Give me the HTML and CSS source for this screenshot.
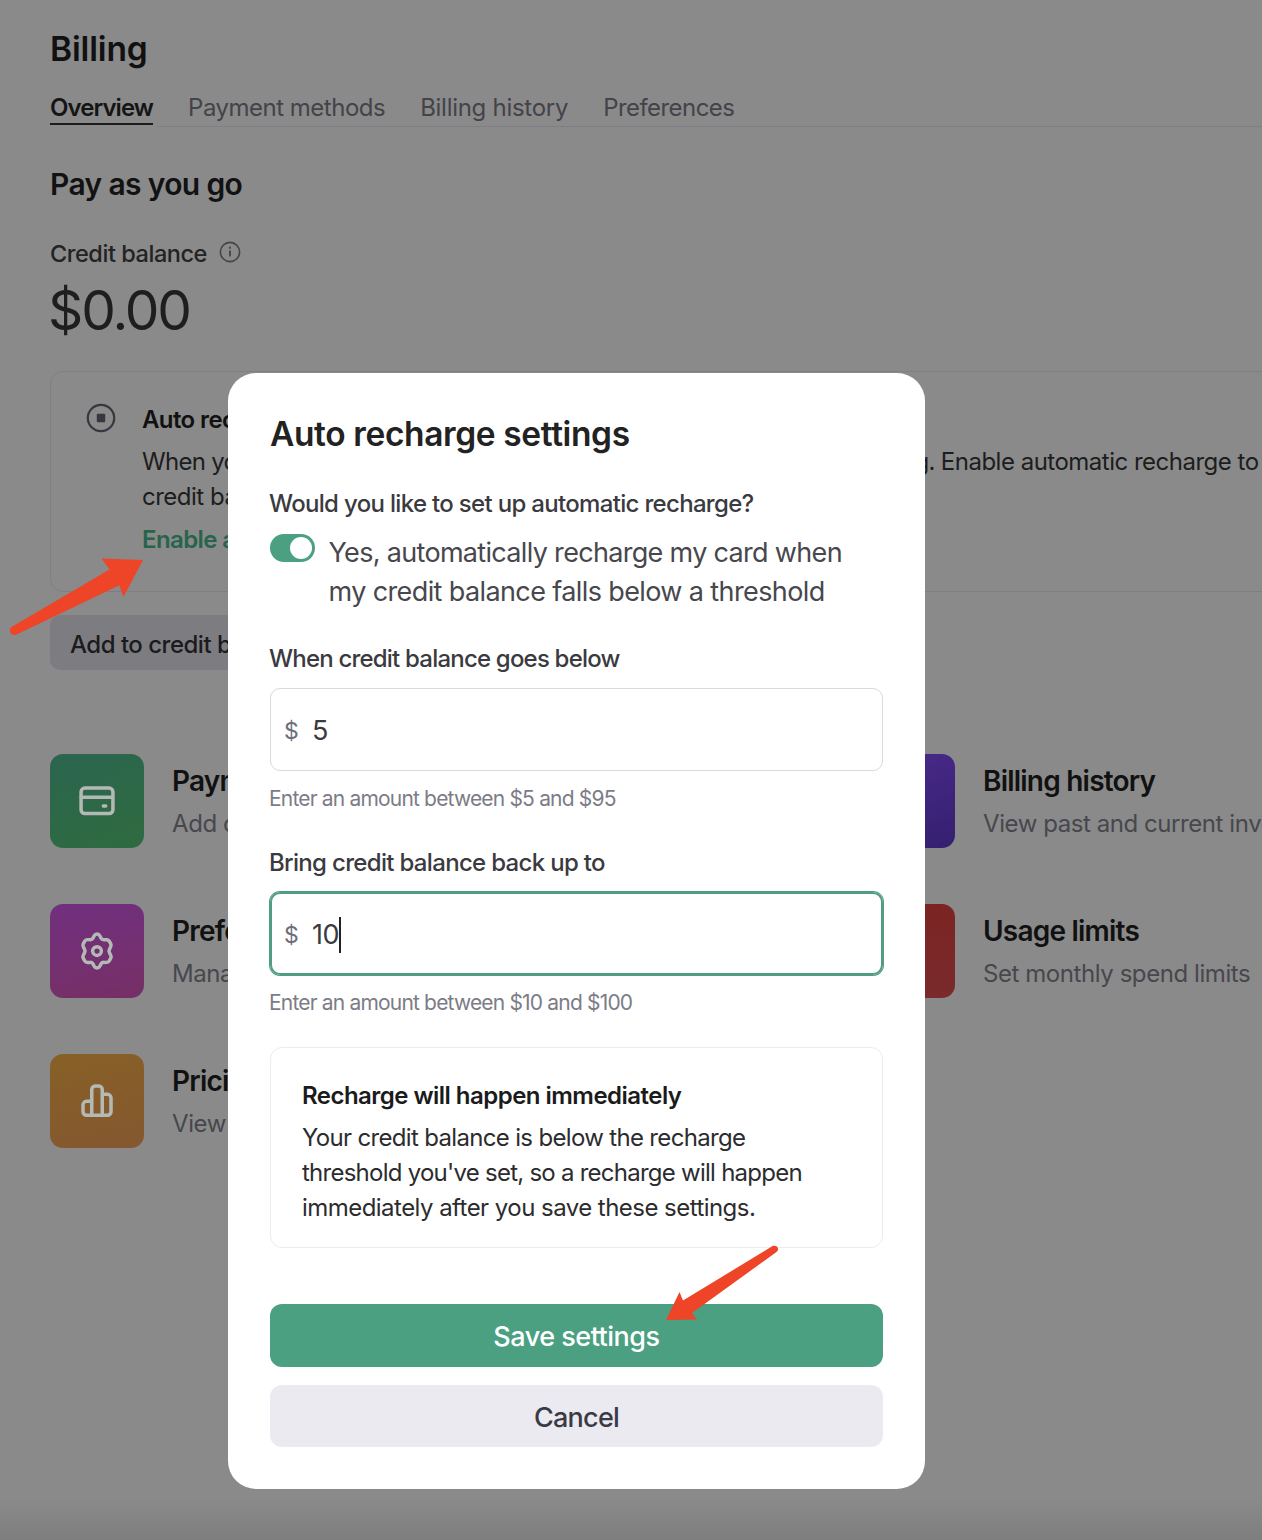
FILE: index.html
```html
<!DOCTYPE html>
<html lang="en">
<head>
<meta charset="utf-8">
<title>Billing</title>
<link rel="stylesheet" href="styles.css">
</head>
<body>
<main class="page">
  <h1 class="page-title">Billing</h1>
  <nav class="tabs">
    <a class="tab tab-active">Overview</a>
    <a class="tab tab-methods">Payment methods</a>
    <a class="tab tab-history">Billing history</a>
    <a class="tab tab-prefs">Preferences</a>
  </nav>
  <h2 class="section-title">Pay as you go</h2>
  <div class="balance-label"><span>Credit balance</span>
    <svg class="info" viewBox="0 0 22 22" fill="none" stroke="currentColor"><circle cx="11" cy="11" r="9.6" stroke-width="1.6"/><path d="M11 9.5v6" stroke-width="1.8"/><path d="M11 5.8v2" stroke-width="1.8"/></svg>
  </div>
  <div class="balance">$0.00</div>
  <section class="notice">
    <svg class="notice-icon" viewBox="0 0 30 30"><circle cx="15" cy="15" r="13.2" fill="none" stroke="currentColor" stroke-width="2.2"/><rect x="10.8" y="10.8" width="8.4" height="8.4" rx="1" fill="currentColor"/></svg>
    <div class="notice-text">
      <h3 class="notice-title">Auto recharge is off</h3>
      <p class="notice-body"><span class="lead">When your credit balance reaches $0, your API requests will stop working. </span>Enable automatic recharge to<br>credit balance topped up.</p>
      <a class="notice-link">Enable auto recharge</a>
    </div>
  </section>
  <button class="add-button">Add to credit balance</button>
  <section class="links">
    <article class="link">
      <div class="tile tile-green"><svg viewBox="0 0 24 24"><rect x="2.9" y="4.6" width="18.2" height="14.6" rx="2.2"/><path d="M3 9.8h18M15.6 14.9h1.4"/></svg></div>
      <div><h3>Payment methods</h3><p>Add or change payment method</p></div>
    </article>
    <article class="link">
      <div class="tile tile-violet"></div>
      <div><h3>Billing history</h3><p>View past and current invoices</p></div>
    </article>
    <article class="link">
      <div class="tile tile-magenta"><svg viewBox="0 0 24 24"><path d="M10.4 3.3a1.8 1.8 0 0 1 3.2 0l.7 1.3a1.8 1.8 0 0 0 1.6.9h1.5a1.9 1.9 0 0 1 1.6.9l.8 1.4a1.9 1.9 0 0 1 0 1.9l-.6 1.1a2.4 2.4 0 0 0 0 2.4l.6 1.1a1.9 1.9 0 0 1 0 1.9l-.8 1.4a1.9 1.9 0 0 1-1.6.9h-1.5a1.8 1.8 0 0 0-1.6.9l-.7 1.3a1.8 1.8 0 0 1-3.2 0l-.7-1.3a1.8 1.8 0 0 0-1.6-.9H6.6a1.9 1.9 0 0 1-1.6-.9l-.8-1.4a1.9 1.9 0 0 1 0-1.9l.6-1.1a2.4 2.4 0 0 0 0-2.4l-.6-1.1a1.9 1.9 0 0 1 0-1.9L5 6.4a1.9 1.9 0 0 1 1.6-.9h1.5a1.8 1.8 0 0 0 1.6-.9z"/><circle cx="12" cy="12" r="2.5"/></svg></div>
      <div><h3>Preferences</h3><p>Manage billing information</p></div>
    </article>
    <article class="link">
      <div class="tile tile-red"></div>
      <div><h3>Usage limits</h3><p>Set monthly spend limits</p></div>
    </article>
    <article class="link">
      <div class="tile tile-orange"><svg viewBox="0 0 24 24"><path d="M9 20.2V5.4a2 2 0 0 1 2-2h2a2 2 0 0 1 2 2v14.8M15 8.2h3a2 2 0 0 1 2 2v8a2 2 0 0 1-2 2H6a2 2 0 0 1-2-2v-4a2 2 0 0 1 2-2h3"/></svg></div>
      <div><h3>Pricing</h3><p>View pricing and FAQs</p></div>
    </article>
  </section>
</main>

<div class="overlay">
  <form class="modal">
    <h2 class="modal-title">Auto recharge settings</h2>
    <div class="label label-setup">Would you like to set up automatic recharge?</div>
    <div class="switch-row">
      <span class="switch"><span class="knob"></span></span>
      <p class="switch-text">Yes, automatically recharge my card when<br><span class="second">my credit balance falls below a threshold</span></p>
    </div>
    <div class="label label-below">When credit balance goes below</div>
    <div class="field"><span class="currency">$</span><span class="value">5</span></div>
    <div class="hint">Enter an amount between $5 and $95</div>
    <div class="label label-upto">Bring credit balance back up to</div>
    <div class="field field-focus"><span class="currency">$</span><span class="value">10</span><span class="caret"></span></div>
    <div class="hint">Enter an amount between $10 and $100</div>
    <section class="callout">
      <h3>Recharge will happen immediately</h3>
      <p>Your credit balance is below the recharge<br><span class="second">threshold you've set, so a recharge will happen</span><br><span class="third">immediately after you save these settings.</span></p>
    </section>
    <button type="button" class="btn btn-primary">Save settings</button>
    <button type="button" class="btn btn-secondary">Cancel</button>
  </form>
  <svg class="arrow arrow-left" viewBox="0 0 140 84"><path d="M2.5 71 L102 12.5 L94 1.500 L136 3 L116 40.5 L112 28.5 L6 79.200 Q1 79 .8 74 Q1 71.800 2.500 71z"/></svg>
  <svg class="arrow arrow-right" viewBox="0 0 120 80"><path d="M3 75 L16.500 47 L20 55.500 L110 .8 Q114.500 0 115.200 4 Q115.200 5.500 113.500 7 L29 68 L34 74.500z"/></svg>
</div>
</body>
</html>
```
FILE: styles.css
```css
* { box-sizing: border-box; }
body {
  margin: 0;
  width: 1262px;
  height: 1540px;
  overflow: hidden;
  position: relative;
  background: linear-gradient(#8a8a8a 1500px, #7e7e7e 1540px);
  font-family: Inter, "Liberation Sans", sans-serif;
  color: #161616;
}
h1, h2, h3, p { margin: 0; }
button { border: 0; font-family: inherit; }
.page { width: 1262px; height: 1540px; padding: 29px 0 0 50px; overflow: hidden; }
.page-title { font-size: 33.5px; line-height: 40px; font-weight: 600; letter-spacing: -.15px; color: #111; }
.tabs {
  display: flex;
  gap: 35px;
  margin-top: 22px;
  height: 36px;
  background: linear-gradient(#7e7e84, #7e7e84) 107px 100% / 100% 1.5px no-repeat;
}
.tab { font-size: 24px; line-height: 34px; height: 34px; color: #434349; white-space: nowrap; }
.tab-active { font-weight: 600; color: #151515; border-bottom: 2px solid #1c1c1c; letter-spacing: -.93px; }
.tab-methods { letter-spacing: -.5px; }
.tab-history { letter-spacing: -.28px; }
.tab-prefs { letter-spacing: -.55px; }
.section-title { margin-top: 37px; font-size: 30px; line-height: 40px; font-weight: 600; letter-spacing: -.65px; color: #121212; }
.balance-label { display: flex; margin-top: 34px; font-size: 23.5px; line-height: 32px; font-weight: 500; letter-spacing: -.45px; color: #232323; }
.info { width: 22px; height: 22px; margin: 3px 0 0 12px; color: #444; }
.balance { margin: 10px 0 0 -2px; font-size: 55px; line-height: 60px; letter-spacing: -2.1px; color: #1e1e1e; }
.notice {
  display: flex;
  width: 1400px;
  height: 221px;
  margin-top: 31px;
  padding: 30px 0 0 35px;
  border: 1.5px solid #7f7f80;
  border-radius: 13px;
}
.notice-icon { width: 30px; height: 30px; margin: 1px 26px 0 0; color: #37373f; flex: none; }
.notice-text { white-space: nowrap; font-size: 24px; line-height: 35px; letter-spacing: -.5px; }
.notice-title { font-size: 24px; line-height: 35px; font-weight: 600; letter-spacing: -.6px; color: #111; }
.notice-body { margin-top: 7px; color: #1d1d1d; }
.notice-body .lead { letter-spacing: -.71px; }
.notice-link { display: block; margin-top: 8px; font-weight: 600; letter-spacing: -.6px; color: #28644b; }
.add-button { display: block; margin-top: 23px; width: 276px; height: 55px; padding: 4px 0 0 20px; border-radius: 10px; background: #7d7d81; color: #1b1b1d; font-size: 24px; font-weight: 500; letter-spacing: -.5px; text-align: left; white-space: nowrap; }
.links { display: grid; grid-template-columns: 811px 811px; row-gap: 56px; margin-top: 84px; }
.link { display: flex; gap: 28px; height: 94px; white-space: nowrap; }
.link h3 { margin-top: 9px; font-size: 28px; line-height: 36px; font-weight: 600; letter-spacing: -.78px; color: #111; }
.link p { margin-top: 8px; font-size: 24px; line-height: 34px; letter-spacing: -.43px; color: #47474d; }
.tile { display: flex; align-items: center; justify-content: center; width: 94px; height: 94px; border-radius: 13px; flex: none; }
.tile svg { width: 42px; height: 42px; fill: none; stroke: #b5b9b6; stroke-width: 2; stroke-linecap: round; stroke-linejoin: round; }
.tile-green { background: linear-gradient(160deg, #2b654f, #2f6b40); }
.tile-violet { background: linear-gradient(160deg, #4b2a8c, #34206f); }
.tile-magenta { background: linear-gradient(170deg, #71307f, #762f65); }
.tile-red { background: linear-gradient(#7c2424, #7a2a2c); }
.tile-orange { background: linear-gradient(170deg, #876026, #855830); }

.overlay { position: absolute; inset: 0; padding: 373px 0 0 228px; }
.modal { display: flex; flex-direction: column; width: 697px; height: 1116px; padding: 41px 42px 0; border-radius: 28px; background: #fff; }
.modal-title { font-size: 33.5px; line-height: 40px; font-weight: 600; letter-spacing: -.38px; color: #222; white-space: nowrap; }
.label { margin-left: -1px; font-size: 24px; line-height: 36px; font-weight: 500; color: #3a3a40; white-space: nowrap; }
.label-setup { margin-top: 32px; letter-spacing: -.68px; }
.switch-row { display: flex; gap: 14px; margin-top: 12px; }
.switch { width: 45px; height: 28px; padding: 3px; border-radius: 14px; background: #4ba082; display: flex; justify-content: flex-end; flex: none; }
.knob { width: 22px; height: 22px; border-radius: 50%; background: #fff; }
.switch-text { margin-left: -.5px; font-size: 27px; line-height: 38.5px; letter-spacing: -.68px; color: #47474d; white-space: nowrap; }
.switch-text .second { letter-spacing: -.61px; }
.label-below { margin-top: 30px; letter-spacing: -.8px; }
.label-upto { margin-top: 31px; letter-spacing: -.68px; }
.field { display: flex; align-items: center; height: 83px; margin-top: 11px; padding: 2px 0 0 13px; border: 1.5px solid #d9d9de; border-radius: 10px; }
.field-focus { padding: 2px 0 0 12px; border: 2px solid #509d81; box-shadow: 0 0 0 1px #509d81; }
.currency { width: 28px; font-size: 23px; color: #6e6e7a; }
.value { font-size: 27px; letter-spacing: -.5px; color: #3a3a40; }
.caret { width: 2px; height: 36px; background: #222; }
.hint { margin: 12px 0 0 -1px; font-size: 21px; line-height: 31px; letter-spacing: -.82px; color: #7c7c87; white-space: nowrap; }
.callout { height: 201px; margin-top: 29px; padding: 30px 31px 0; border: 1.5px solid #ececef; border-radius: 12px; font-size: 24px; line-height: 35px; white-space: nowrap; }
.callout h3 { font-size: 24px; font-weight: 600; letter-spacing: -.53px; color: #1b1b1b; }
.callout p { margin-top: 7px; letter-spacing: -.67px; color: #2c2c2f; }
.callout .second { letter-spacing: -.75px; }
.callout .third { letter-spacing: -.54px; }
.btn { height: 63px; border-radius: 12px; font-size: 27px; font-weight: 500; padding: 2px 0 0; letter-spacing: -.5px; }
.btn-primary { margin-top: 56px; background: #4ba082; color: #fff; }
.btn-secondary { margin-top: 18px; height: 62px; background: #ebeaf1; color: #3a3a45; letter-spacing: -.75px; }
.arrow { position: absolute; fill: #ee4427; }
.arrow-left { left: 9px; top: 557px; width: 138px; height: 83px; }
.arrow-right { left: 663px; top: 1245px; width: 120px; height: 80px; }
```
